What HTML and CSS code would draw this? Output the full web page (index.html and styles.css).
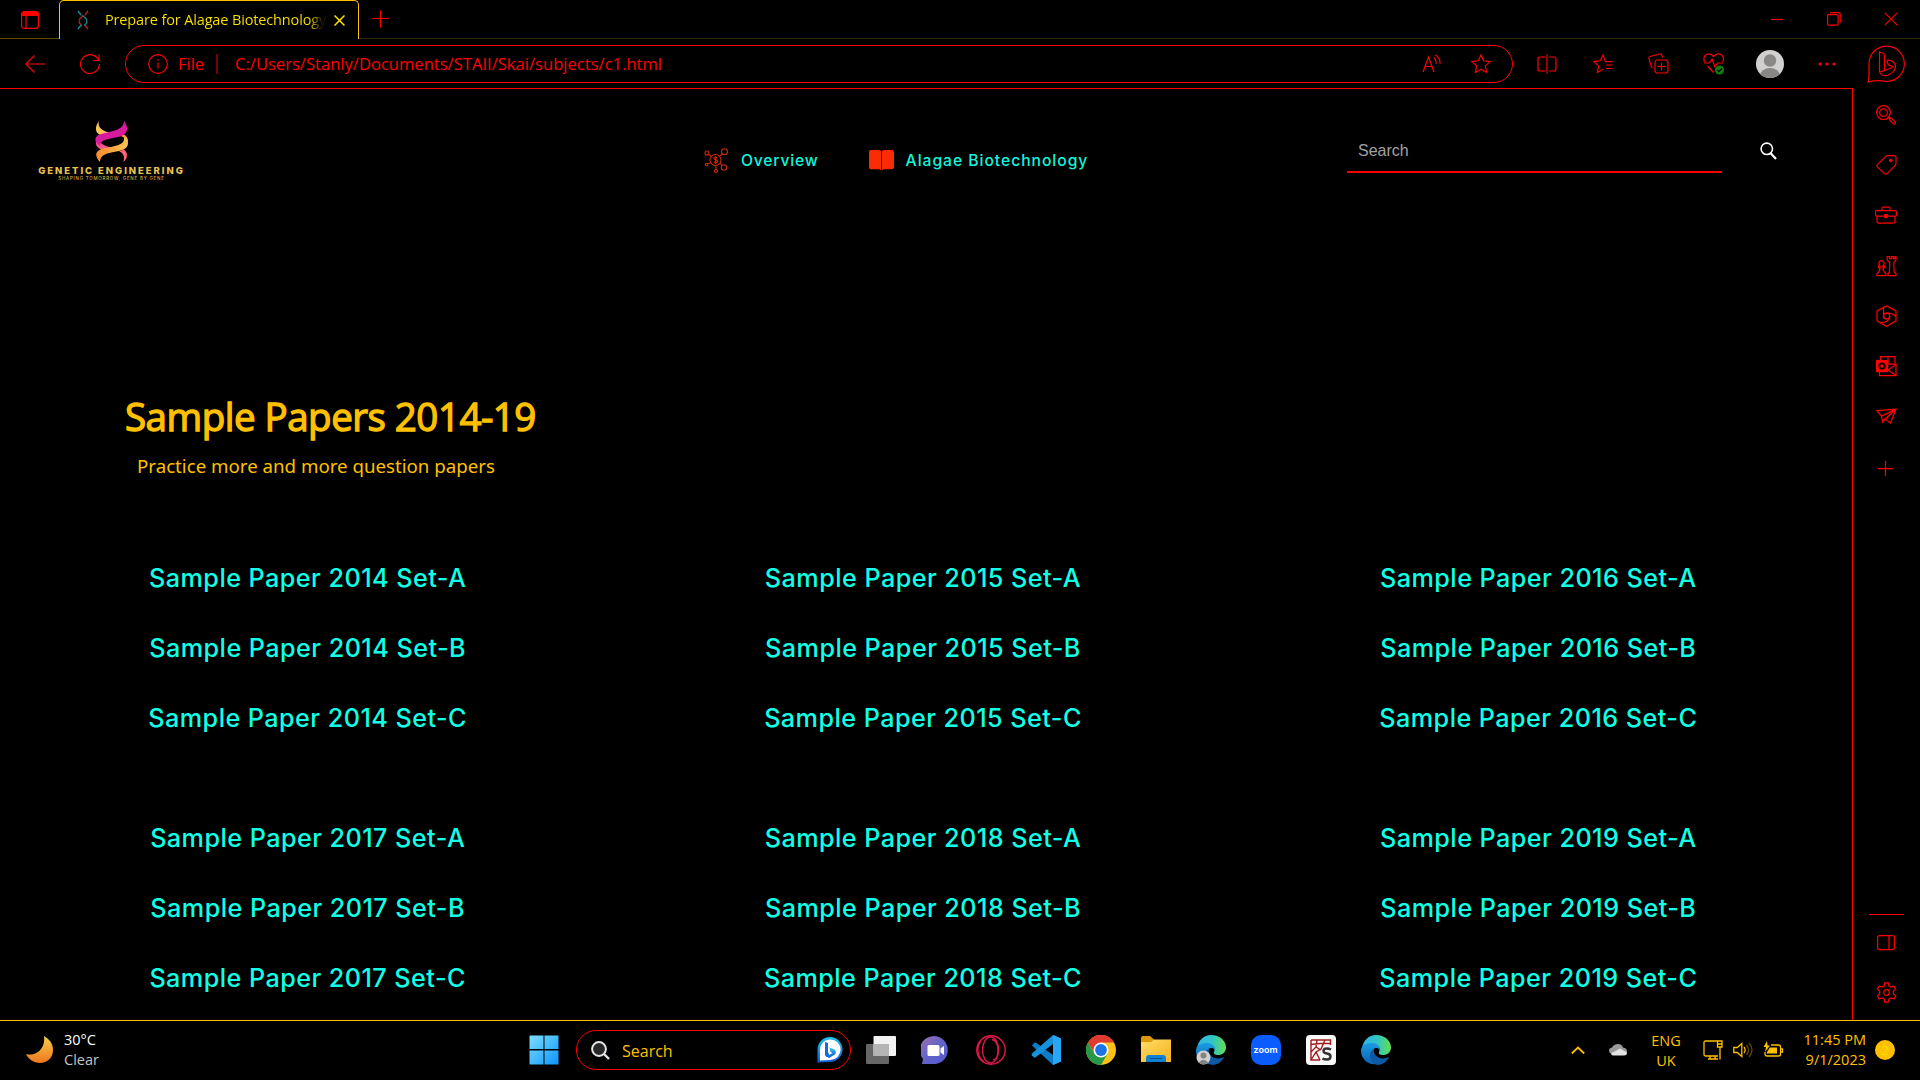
FILE: index.html
```html
<!DOCTYPE html>
<html lang="en">
<head>
<meta charset="utf-8">
<title>Prepare for Alagae Biotechnology</title>
<link rel="stylesheet" href="styles.css">
</head>
<body>
<svg class="defs" width="0" height="0">
  <defs>
    <linearGradient id="ea" x1="0" y1="0" x2="1" y2="0"><stop offset="0" stop-color="#2fb4ee"/><stop offset=".55" stop-color="#32c6c0"/><stop offset="1" stop-color="#66e04b"/></linearGradient>
    <linearGradient id="eb" x1="0" y1="0" x2="0" y2="1"><stop offset="0" stop-color="#1b9de0"/><stop offset="1" stop-color="#0b62b8"/></linearGradient>
    <linearGradient id="moon" x1="0" y1="0" x2="0" y2="1"><stop offset="0" stop-color="#f6cf4a"/><stop offset="1" stop-color="#f0761f"/></linearGradient>
    <linearGradient id="win" gradientUnits="userSpaceOnUse" x1="0" y1="0" x2="30" y2="30"><stop offset="0" stop-color="#7fe0ff"/><stop offset="1" stop-color="#0a93fb"/></linearGradient>
    <linearGradient id="chat" x1="0" y1="0" x2="1" y2="1"><stop offset="0" stop-color="#a070b0"/><stop offset=".5" stop-color="#6264c8"/><stop offset="1" stop-color="#5558d0"/></linearGradient>
    <linearGradient id="fold" x1="0" y1="0" x2="1" y2="1"><stop offset="0" stop-color="#ffdc66"/><stop offset="1" stop-color="#f5b21e"/></linearGradient>
    <linearGradient id="gold" x1="0" y1="0" x2="1" y2="0"><stop offset="0" stop-color="#fb8a2c"/><stop offset="1" stop-color="#fcc456"/></linearGradient>
    <linearGradient id="bing" x1="0" y1="0" x2="0" y2="1"><stop offset="0" stop-color="#22c5f0"/><stop offset="1" stop-color="#1559d8"/></linearGradient>
    <symbol id="edge" viewBox="0 0 30 30">
      <path d="M1 14C2 5 8 0 15 0c9 0 15 6 15 12.500 0 5-4 7.500-8 7.500-3 0-5-1-4-3 2-4-1-8-6-8C6 9 2 11 1 14z" fill="url(#ea)"/>
      <path d="M0 16C0 10 5 8 11 8c5 0 8.500 3 7.500 7-1-2-3-2.500-5-1.500-5 3-4 12 3 15.500-9 2-16.500-5-16.500-13z" fill="url(#eb)"/>
      <path d="M13.500 13.500C7 16 7 26 16 30c5 0 10-3 12-8-6 3-14 1-15-5-.2-1.500 0-2.500.5-3.500z" fill="#0c59a4"/>
    </symbol>
  </defs>
</svg>

<div class="window">
  <header class="tabstrip">
    <div class="tab-lead"><svg class="ln" width="18" height="18" viewBox="0 0 18 18"><rect x=".6" y=".6" width="16.800" height="16.800" rx="2.500"/><path d="M1 4.500V2.500L2.500 1h13L17 2.500v2z" fill="red"/><path d="M5 5v12"/></svg></div>
    <div class="tab">
      <svg class="tab-dna" width="12" height="20" viewBox="0 0 12 20" fill="none" stroke-width="1.300"><path d="M1 1l3 4M4.500 5.500Q6 6 8 7.500c3.500 3 2 6-1 8" stroke="#159292"/><path d="M11 1L8 5M7.500 5.500Q6 6 4 7.500c-3.500 3-2 6 1 8M8 15l3 4" stroke="#b12626"/><path d="M4 15l-3 4" stroke="#159292"/></svg>
      <span class="tab-title">Prepare for Alagae Biotechnology</span>
      <svg class="tab-x" width="11" height="11" viewBox="0 0 11 11"><path d="M.5.5l10 10M10.500.5l-10 10" stroke="#ffe600" stroke-width="1.500"/></svg>
    </div>
    <div class="tab-rest">
      <svg class="ln" width="18" height="18" viewBox="0 0 18 18"><path d="M8.500 .5v17M0 8.500h17"/></svg>
      <div class="win-btns">
        <svg class="ln" width="14" height="14" viewBox="0 0 14 14"><path d="M1 7.500h12"/></svg>
        <svg class="ln" width="14" height="14" viewBox="0 0 14 14"><rect x=".6" y="2.600" width="10.500" height="10.500" rx="1"/><path d="M3 .6h8.500q1.700 0 1.700 1.700V11"/></svg>
        <svg class="ln" width="14" height="14" viewBox="0 0 14 14"><path d="M.8.8l12.400 12.400M13.200.8L.8 13.200"/></svg>
      </div>
    </div>
  </header>

  <div class="toolbar">
    <svg class="ln back" width="20" height="18" viewBox="0 0 20 18"><path d="M20 9H1M9.500.5L1 9l8.500 8.500"/></svg>
    <svg class="ln reload" width="20" height="20" viewBox="0 0 20 20"><path d="M18.700 6.500A9.400 9.400 0 1 0 19.400 10M19 .5v6h-6"/></svg>
    <div class="address">
      <svg class="ln" width="20" height="20" viewBox="0 0 20 20"><circle cx="10" cy="10" r="9.300"/><path d="M10 8.500v6M10 5v1.600"/></svg>
      <span class="scheme">File</span>
      <span class="url">C:/Users/Stanly/Documents/STAII/Skai/subjects/c1.html</span>
      <svg class="ln" width="20" height="19" viewBox="0 0 20 19"><path d="M1 18L6.500 3 12 18M3 12.500h7M11.500 3.500q3 2 2.500 6.500M13 .7q5.500 3 5 9"/></svg>
      <svg class="ln fav" width="20" height="20" viewBox="0 0 20 20"><path d="M10 1l2.700 5.800 6.300.8-4.600 4.300 1.200 6.500L10 15.200l-5.600 3.200 1.200-6.500L1 7.600l6.300-.8z"/></svg>
    </div>
    <div class="tools">
      <svg class="ln" width="20" height="20" viewBox="0 0 20 20"><path d="M8 3H3Q1 3 1 5v10q0 2 2 2h5M12 3h5q2 0 2 2v10q0 2-2 2h-5M10 .5v19"/></svg>
      <svg class="ln" width="20" height="20" viewBox="0 0 20 20"><path d="M19.500 7.700h-7L10 1 7.300 6.800 1 7.600l4.600 4.300-1.200 6.500L10 15.300M13 11h6.500M13 14.500h6.500"/></svg>
      <svg class="ln" width="21" height="21" viewBox="0 0 21 21"><rect x="7" y="7" width="13" height="13" rx="2.500"/><path d="M13.500 9.700v7.600M9.700 13.500h7.600M14.500 4.500L13.700 2Q13 .5 11.500 1L2 3.500Q.5 4 1 5.700l2 7q.5 1.800 1.500 2.300"/></svg>
      <svg class="ln" width="22" height="22" viewBox="0 0 22 22"><path d="M1.500 9C-1 2 6-2 10.500 3.500 15-2 22.500 2 19.800 9M1 10h5.500l2.500-4 3 8 2.500-4H20M4.500 13l6 6.500"/><circle cx="16.500" cy="17" r="4.500" fill="#107c10" stroke="none"/><path d="M14.500 17l1.500 1.500 3-3" stroke="#000"/></svg>
      <svg width="28" height="28" viewBox="0 0 28 28"><clipPath id="av"><circle cx="14" cy="14" r="14"/></clipPath><g clip-path="url(#av)"><path d="M0 0h28v28H0z" fill="#d2d0ce"/><circle cx="14" cy="10.500" r="6.200" fill="#8a8886"/><ellipse cx="14" cy="26" rx="10" ry="8" fill="#8a8886"/></g></svg>
      <svg width="18" height="4" viewBox="0 0 18 4" fill="red"><circle cx="2" cy="2" r="1.600"/><circle cx="9" cy="2" r="1.600"/><circle cx="16" cy="2" r="1.600"/></svg>
      <svg class="ln" width="38" height="38" viewBox="0 0 38 38"><path d="M1 37Q2 34 2 30V18A17.700 17.700 0 1 1 19.500 36.500Q11 34.500 1 37z"/><path d="M12.500 7l3 1q2 .7 2 2.500v15l-5 1.500zM12.500 26q1 5.500 7.500 4.500 8-3 8.500-8.500 0-5-5-6.500-4-1-3.500 1l1.500 3.500 5 2M27 22l-9.500 3.500"/></svg>
    </div>
  </div>

  <div class="body">
    <main class="page">
      <nav class="nav">
        <div class="logo">
          <svg width="34" height="41" viewBox="0 0 34 41"><path d="M4 0C-1 7 0 13 8 15l7-3C8 10 2 7 4 0z" fill="#fcc456"/><path d="M19 14c8 0 12 3 14 8 1-7-4-9-9-10z" fill="#fb9a34"/><path d="M1 20c-1 7 5 9 14 11l7-3C13 26 6 24 5 20z" fill="#ff5590"/><path d="M29 0c6 8 3 14-6 16C12 18 5 19 5 25-2 21-1 14 8 12.500 20 10 29 8 29 0z" fill="#d81b9e"/><path d="M31 16c4 7 2 12-7 14C13 32 5 33 5 41 0 36-1 30 8 27.500 20 25 30 24 29 17z" fill="url(#gold)"/><path d="M24 30.500c4 1.500 6 4 4.500 10.500 4-3 5-9 .5-12.500z" fill="#ff6478"/></svg>
          <span class="logo-name">GENETIC ENGINEERING</span>
          <span class="logo-tag">SHAPING TOMORROW, GENE BY GENE</span>
        </div>
        <div class="links">
          <a class="link"><svg width="25" height="25" viewBox="0 0 25 25" fill="none" stroke="#d52905" stroke-width="1.100"><circle cx="11.500" cy="12" r="5.500"/><circle cx="3" cy="5" r="2"/><circle cx="20.500" cy="3.700" r="3"/><circle cx="2.500" cy="16.500" r="1.200"/><circle cx="20" cy="19.500" r="2.700"/><circle cx="12" cy="23" r="1.500"/><path d="M4.500 6.500l3 2M16 8l2.500-2M4 16l3-1.500M16 15l2 2.500M12 18v3.500M13.500 9.800q-3.500-1.500-3.500.5 0 1.500 2 1.700t1.700 1.800q-1.700 1.600-3.700 0M11.700 8.500v7.500"/></svg><span class="mont">Overview</span></a>
          <a class="link link2"><svg width="25" height="21" viewBox="0 0 25 21" fill="#f92c06"><path d="M2 0h7q2.500 0 3 1v19q-1-.8-3-.8H2q-2 0-2-2V2Q0 0 2 0zM23 0h-7q-2.500 0-3 1v19q1-.8 3-.8h7q2 0 2-2V2q0-2-2-2z"/></svg><span class="mont wide">Alagae Biotechnology</span></a>
        </div>
        <div class="search">
          <div class="field">Search</div>
          <svg width="17" height="18" viewBox="0 0 17 18" fill="none" stroke="#fff"><circle cx="6.800" cy="6.800" r="5.700" stroke-width="1.600"/><path d="M10.500 11l5.500 6" stroke-width="2.200"/></svg>
        </div>
      </nav>
      <h1 class="title">Sample Papers 2014-19</h1>
      <p class="subtitle">Practice more and more question papers</p>
      <section class="papers">
        <div class="col"><a>Sample Paper 2014 Set-A</a><a>Sample Paper 2014 Set-B</a><a>Sample Paper 2014 Set-C</a></div>
        <div class="col"><a>Sample Paper 2015 Set-A</a><a>Sample Paper 2015 Set-B</a><a>Sample Paper 2015 Set-C</a></div>
        <div class="col"><a>Sample Paper 2016 Set-A</a><a>Sample Paper 2016 Set-B</a><a>Sample Paper 2016 Set-C</a></div>
        <div class="col"><a>Sample Paper 2017 Set-A</a><a>Sample Paper 2017 Set-B</a><a>Sample Paper 2017 Set-C</a></div>
        <div class="col"><a>Sample Paper 2018 Set-A</a><a>Sample Paper 2018 Set-B</a><a>Sample Paper 2018 Set-C</a></div>
        <div class="col"><a>Sample Paper 2019 Set-A</a><a>Sample Paper 2019 Set-B</a><a>Sample Paper 2019 Set-C</a></div>
      </section>
    </main>

    <aside class="sidebar">
      <svg class="ln" width="20" height="20" viewBox="0 0 20 20"><circle cx="7.500" cy="7.500" r="6.900"/><circle cx="7.500" cy="7.500" r="3.800"/><path d="M12.500 12l1.500 3 3 3.500q1 1 2 0t0-2l-3.500-3z"/></svg>
      <svg class="ln" width="21" height="21" viewBox="0 0 21 21"><path d="M11.500 1H18q2 0 2 2v6q0 1-1 2l-8 8q-1.200 1.200-2.500 0l-7-6.500q-1.200-1.200 0-2.500l8-8q1-1 2-1z"/><circle cx="14.800" cy="6" r="1.200" fill="red"/></svg>
      <svg class="ln" width="22" height="18" viewBox="0 0 22 18"><rect x=".6" y="4.500" width="20.800" height="5.500" rx="1"/><path d="M2 10v5q0 2 2 2h14q2 0 2-2v-5M7 4V2.500Q7 1 8.500 1h5Q15 1 15 2.500V4"/><rect x="9.800" y="8.500" width="2.400" height="3" fill="red"/></svg>
      <svg class="ln" width="21" height="21" viewBox="0 0 21 21"><path d="M1 20v-2q3-2 3-6H2.500v-1.500H4Q1.800 8 3.500 6q2-2 4 0 1.800 2-.8 4.500h1.800V12H7q0 4 3 6v2zM12 20v-2q1.500-1 1.500-3l.2-8-2.500-2.500V1h2.300v2h2V1h2v2h1.500V1H20v3.500L17.800 7l.2 8q0 2 2 3v2z"/></svg>
      <svg class="ln" width="21" height="22" viewBox="0 0 21 22"><path d="M10.500.8l9.500 5v10l-9.500 5.400-9.500-5.400v-10zM7.500 2.500v11M7.500 8.500q8-2 12.500 3M4.500 17.500q8 0 9.500-6"/><circle cx="10.700" cy="11" r="3"/></svg>
      <svg class="ln" width="21" height="21" viewBox="0 0 21 21"><rect x=".6" y="5" width="11" height="11" fill="red"/><circle cx="6" cy="10.500" r="2.700" stroke="#000" stroke-width="1.800"/><path d="M4.500 4.500V1H19v7.500M12 1v8M12 8.500h7M3.500 16.500V20H20V9l-8 5.500 8 5.500"/></svg>
      <svg class="ln" width="21" height="16" viewBox="0 0 21 16"><path d="M.8 2.500L20 1l-5.500 14-5-4-3 3-1-6zM20 1L5.500 8M20 1l-10.500 10M20 1L6.500 13"/></svg>
      <svg class="ln plus" width="16" height="16" viewBox="0 0 16 16"><path d="M7.500 0v15M0 7.500h15"/></svg>
      <div class="side-end">
        <svg class="ln" width="18" height="16" viewBox="0 0 18 16"><rect x=".6" y=".6" width="16.800" height="14" rx="2"/><path d="M12 1v14" /></svg>
        <svg class="ln" width="21" height="21" viewBox="0 0 21 21"><circle cx="10.500" cy="10.500" r="2.800"/><path d="M8.700.8h3.600l.6 3.200 2 1.100 3-1.100 1.800 3-2.400 2.200v2.600l2.400 2.200-1.800 3-3-1.100-2 1.100-.6 3.200H8.700l-.6-3.200-2-1.100-3 1.100-1.800-3 2.400-2.200V9.200L1.300 7l1.800-3 3 1.100 2-1.100z"/></svg>
      </div>
    </aside>
  </div>

  <footer class="taskbar">
    <div class="weather">
      <svg width="28" height="28" viewBox="0 0 28 28"><path d="M18 0c5 3 9 7 9 14 0 8-6 13-13 13C8 27 2 23 0 18c10 3 20-6 18-18z" fill="url(#moon)"/></svg>
      <div class="wtext"><span>30°C</span><span class="dim">Clear</span></div>
    </div>
    <svg class="start" width="30" height="30" viewBox="0 0 30 30" fill="url(#win)"><path d="M1 .5h13.500V14H.5V1zM15.500.5H29l.5.5v13h-14zM.5 15.500h14v14H1l-.5-.5zM15.500 15.500h14V29l-.5.5H15.500z"/></svg>
    <div class="tsearch">
      <svg width="19" height="19" viewBox="0 0 19 19" fill="#282828" stroke="#e6e6e6" stroke-width="2"><circle cx="8" cy="8" r="6.900"/><path d="M13 13l5 5" stroke-width="2.400"/></svg>
      <span class="tlabel">Search</span>
      <svg width="26" height="26" viewBox="0 0 26 26"><path d="M.5 25.500V12.500A12.500 12.500 0 1 1 13 25z" fill="url(#bing)"/><path d="M3 23.500V13a10.300 10.300 0 1 1 10.300 10z" fill="#fff"/><path d="M8 5l3 1v9l1.500 3.500L9.500 20 8 18z" fill="#1b66dc"/><path d="M12.500 10.500l5 2.300q2.500 2.200.5 4.700L12 21l-2.500-1.500 6-3.500-2-1z" fill="url(#bing)"/></svg>
    </div>
    <div class="apps">
      <svg width="30" height="28" viewBox="0 0 30 28"><rect y="8" width="23" height="20" rx="1" fill="#666"/><rect x="7.500" y="0" width="22.500" height="20" rx="1" fill="#f2f2f2"/><path d="M7.500 8H23v12H7.500z" fill="#b5b5b5"/></svg>
      <svg width="29" height="29" viewBox="0 0 29 29"><path d="M1 28l1-5A14 14 0 1 1 14.500 28z" fill="url(#chat)"/><rect x="6.500" y="9" width="12" height="11" rx="1.500" fill="#fff"/><path d="M19.500 12.500l3.500-2.500v9l-3.500-2.500z" fill="#fff"/></svg>
      <svg width="30" height="30" viewBox="0 0 30 30" fill="none" stroke="#e01848" stroke-width="1.400"><circle cx="15" cy="15" r="14.200"/><ellipse cx="14.500" cy="15" rx="8" ry="13"/><path d="M16 4.500c8 2 8 19 1 20.500M5 6C0 12 1 22 8 27"/></svg>
      <svg width="30" height="30" viewBox="0 0 30 30"><path d="M22 0l8 3.500v23L22 30 1 10.500 3 8q1-1 2.500 0L22 20z" fill="#0c7dc4"/><path d="M22 0v9L5 22q-1.500 1-2.500 0L1 20.500q-.8-1 0-2z" fill="#1692dc"/><path d="M22 0l8 3.500v23L22 30z" fill="#2aa7f2"/></svg>
      <svg width="30" height="30" viewBox="0 0 30 30"><circle cx="15" cy="15" r="15" fill="#fbc116"/><path d="M2 7.500a15 15 0 0 1 26 0H15l-6.500 11z" fill="#e23a2e"/><path d="M2 7.500A15 15 0 0 0 15 30l6.500-11.250H8.500z" fill="#279847"/><circle cx="15" cy="15" r="7.500" fill="#fff"/><circle cx="15" cy="15" r="5.900" fill="#1d73e8"/></svg>
      <svg width="30" height="28" viewBox="0 0 30 28"><path d="M0 2q0-2 2-2h7l4 3.500V9H0z" fill="#dd9a06"/><path d="M0 6h10l3-2.500h17V26H0z" fill="url(#fold)"/><path d="M5 26v-4q0-3 3-3h14q3 0 3 3v4z" fill="#1080cf"/><path d="M9 22.500h12" stroke="#0a5298"/></svg>
      <svg width="30" height="30" viewBox="0 0 30 30"><use href="#edge"/><circle cx="7.500" cy="22.500" r="7" fill="#d2d0ce"/><circle cx="7.500" cy="20.500" r="3" fill="#858381"/><path d="M2.800 27.500q4.700-5.500 9.400 0-4.700 4-9.400 0z" fill="#858381"/></svg>
      <div class="zoom">zoom</div>
      <svg width="30" height="30" viewBox="0 0 30 30"><rect width="30" height="30" rx="4" fill="#f8f8f8"/><path d="M5 5h19.500v5M5 5v20h9M5 9.500l9-1 10.500 0M11 5l-1 7-5 5M10 12l5 3M19 5l-4 9-5 3-5 8M10 17l4 8" fill="none" stroke="#a01c20" stroke-width="1.400"/><path d="M25 14.500q-2-1-4.500-1-3 0-3 2.500 0 2 3.500 2.500t3.500 3q0 3-3.500 3-3 0-4.500-1" fill="none" stroke="#333" stroke-width="2.400"/></svg>
      <svg width="30" height="30"><use href="#edge"/></svg>
    </div>
    <div class="tray">
      <svg class="yl chev" width="14" height="8" viewBox="0 0 14 8"><path d="M.8 7.500l6.200-6 6.200 6" stroke-width="1.800"/></svg>
      <svg class="cloud" width="18" height="12" viewBox="0 0 18 12"><path d="M3 10q-3-1-3-3.500T3 3.500Q5 0 9 0t5 3.500q4 .5 4 4T14 11z" fill="#999"/><path d="M4 11.500Q2 11 2 9.500l9-5 7 4q0 3-3 3z" fill="#e2e2e2"/></svg>
      <div class="lang"><span>ENG</span><span>UK</span></div>
      <div class="status">
        <svg class="yl" width="20" height="20" viewBox="0 0 20 20"><path d="M14 1H2.500Q1 1 1 2.500v12Q1 16 2.500 16H15M5 19h10M7 16v3M12 16v3M14.500 1H19v6h-4.500zM17 7v12.500M15 4h4"/></svg>
        <svg class="yl" width="20" height="18" viewBox="0 0 20 18"><path d="M.8 6.500v5h3.500l4.500 4V2.500l-4.500 4zM11 6q2.300 3 0 6"/><path d="M13.500 4q4 5 0 10M16 2q6 7 0 14" stroke="#5c4600"/></svg>
        <svg class="yl" width="21" height="18" viewBox="0 0 21 18"><path d="M8 4h7.500q2 0 2 2v7q0 2-2 2H4q-2 0-2-2v-2M18 8h1.500v3H18"/><path d="M7 6.500h7v6H4V11zM4 0l-3.500 6H3L2 11l5-6.500H4.500z" fill="#ffc000" stroke="none"/></svg>
      </div>
      <div class="clock"><span>11:45 PM</span><span>9/1/2023</span></div>
      <div class="badge">2</div>
    </div>
  </footer>
</div>
</body>
</html>
```
FILE: styles.css
```css
* { box-sizing: border-box; }
body { margin: 0; background: #000; color: #ffc000; font-family: "Open Sans", "Noto Sans", sans-serif; overflow: hidden; }
svg { display: block; flex: none; }
span, a { white-space: nowrap; }
.defs { position: absolute; }
.ln { fill: none; stroke: #f00; stroke-width: 1.2; }
.yl { fill: none; stroke: #ffc000; stroke-width: 1.3; }
.window { width: 1920px; height: 1080px; display: flex; flex-direction: column; }

.tabstrip { height: 39px; display: flex; }
.tab-lead { width: 59px; padding: 11px 0 0 21px; border-bottom: 1px solid #5c4600; }
.tab { width: 300px; height: 39px; display: flex; align-items: center; border: 1px solid #ffc000; border-bottom: 0; border-radius: 5px 5px 0 0; padding-left: 17px; }
.tab-title { width: 224px; margin-left: 16px; font-size: 14.5px; line-height: 22px; letter-spacing: -.14px; color: transparent; background: linear-gradient(90deg, #ffe600 91%, #1a1700 97%); -webkit-background-clip: text; background-clip: text; }
.tab-x { margin-left: 5px; }
.tab-rest { flex: 1; display: flex; justify-content: space-between; align-items: center; padding-left: 13px; border-bottom: 1px solid #332600; }
.win-btns { display: flex; gap: 43px; padding-right: 22px; }

.toolbar { height: 49px; display: flex; align-items: center; padding-left: 25px; }
.reload { margin-left: 35px; }
.address { width: 1388px; height: 38px; margin-left: 25px; border: 1px solid #f00; border-radius: 19px; display: flex; align-items: center; padding-left: 22px; color: #f00; font-size: 16.5px; }
.scheme { width: 40px; margin-left: 10px; border-right: 2px solid #700; line-height: 20px; }
.url { flex: 1; margin-left: 17px; letter-spacing: .04px; }
.fav { margin: 0 21px 0 29px; }
.tools { display: grid; grid-template-columns: 56px 56px 55px 56px 56px 58px 59px; justify-items: center; align-items: center; margin-left: 6px; }

.body { height: 932px; display: flex; }
.page { width: 1853px; border-top: 1px solid #f00; border-right: 1px solid #f00; }
.nav { height: 122px; display: flex; }
.logo { width: 147px; margin: 32px 0 0 38px; display: flex; flex-direction: column; align-items: center; font-family: Inter, sans-serif; color: #e9c24f; }
.logo-name { font-size: 9.5px; line-height: 12px; font-weight: 800; margin-top: 3px; letter-spacing: 1.95px; }
.logo-tag { font-size: 4.5px; line-height: 5px; letter-spacing: .75px; margin-top: -1px; }
.links { width: 385px; display: flex; align-items: center; height: 24px; margin: 59px 0 0 519px; }
.link { display: flex; align-items: center; }
.link svg { margin-right: 12px; }
.link2 { margin-left: 50px; }
.mont { font: 500 15.7px Inter, sans-serif; color: #10f5dc; letter-spacing: .8px; }
.wide { letter-spacing: .95px; }
.search { display: flex; align-items: flex-start; margin: 38px 0 0 258px; }
.field { width: 375px; height: 46px; border-bottom: 2px solid #f00; padding-left: 11px; font: 16px/47px "Liberation Sans", sans-serif; color: #a0a0a0; }
.search svg { margin: 15px 0 0 38px; }
.title { margin: 178px 0 0 125px; font-size: 38.5px; line-height: 54px; font-weight: 400; letter-spacing: -.5px; -webkit-text-stroke: 1.3px #ffc000; }
.subtitle { margin: 9px 0 0 137px; font: 18.7px/27px "Noto Sans", sans-serif; }
.papers { width: 1846px; margin-top: 84px; display: grid; grid-template-columns: repeat(3, 1fr); row-gap: 90px; }
.col { display: flex; flex-direction: column; gap: 40px; align-items: center; font: 500 25.2px/30px Inter, sans-serif; letter-spacing: .45px; color: #10ffe6; }

.sidebar { width: 67px; padding: 2px 1px 0 0; display: flex; flex-direction: column; align-items: center; }
.sidebar > svg { height: 50.2px; }
.sidebar > .plus { margin-top: 3px; }
.side-end { width: 35px; margin-top: auto; border-top: 1px solid #f00; display: flex; flex-direction: column; align-items: center; gap: 31px; padding: 20px 0 17px; }

.taskbar { height: 60px; border-top: 1px solid #ffc000; display: flex; align-items: center; padding-bottom: 1px; font-size: 14.5px; }
.weather { width: 529px; display: flex; align-items: center; padding-left: 26px; color: #fff; }
.wtext { display: flex; flex-direction: column; line-height: 20px; margin: 0 0 0 10px; }
.dim { color: #c4c4c4; }
.tsearch { width: 275px; height: 40px; margin-left: 17px; border: 1px solid #f00; border-radius: 20px; display: flex; align-items: center; padding: 0 7px 0 14px; }
.tlabel { flex: 1; margin-left: 12px; padding-top: 1px; font-size: 16px; }
.apps { display: grid; grid-template-columns: repeat(10, 55px); width: 550px; justify-items: center; align-items: center; margin-left: 2px; }
.zoom { width: 30px; height: 30px; border-radius: 10px; background: #0b5cff; color: #fff; font: 600 9px/29px Inter, sans-serif; text-align: center; }
.tray { flex: 1; display: flex; align-items: center; padding-left: 168px; }
.cloud { margin-left: 24px; }
.lang { width: 40px; margin: 1px 0 0 19px; display: flex; flex-direction: column; align-items: center; line-height: 20px; }
.status { display: flex; align-items: center; gap: 10px; margin-left: 17px; }
.clock { width: 82px; display: flex; flex-direction: column; align-items: flex-end; line-height: 20px; }
.badge { width: 20px; height: 20px; margin-left: 9px; border-radius: 50%; background: #ffc000; color: #ffdc00; font-size: 13px; line-height: 20px; text-align: center; }
```
